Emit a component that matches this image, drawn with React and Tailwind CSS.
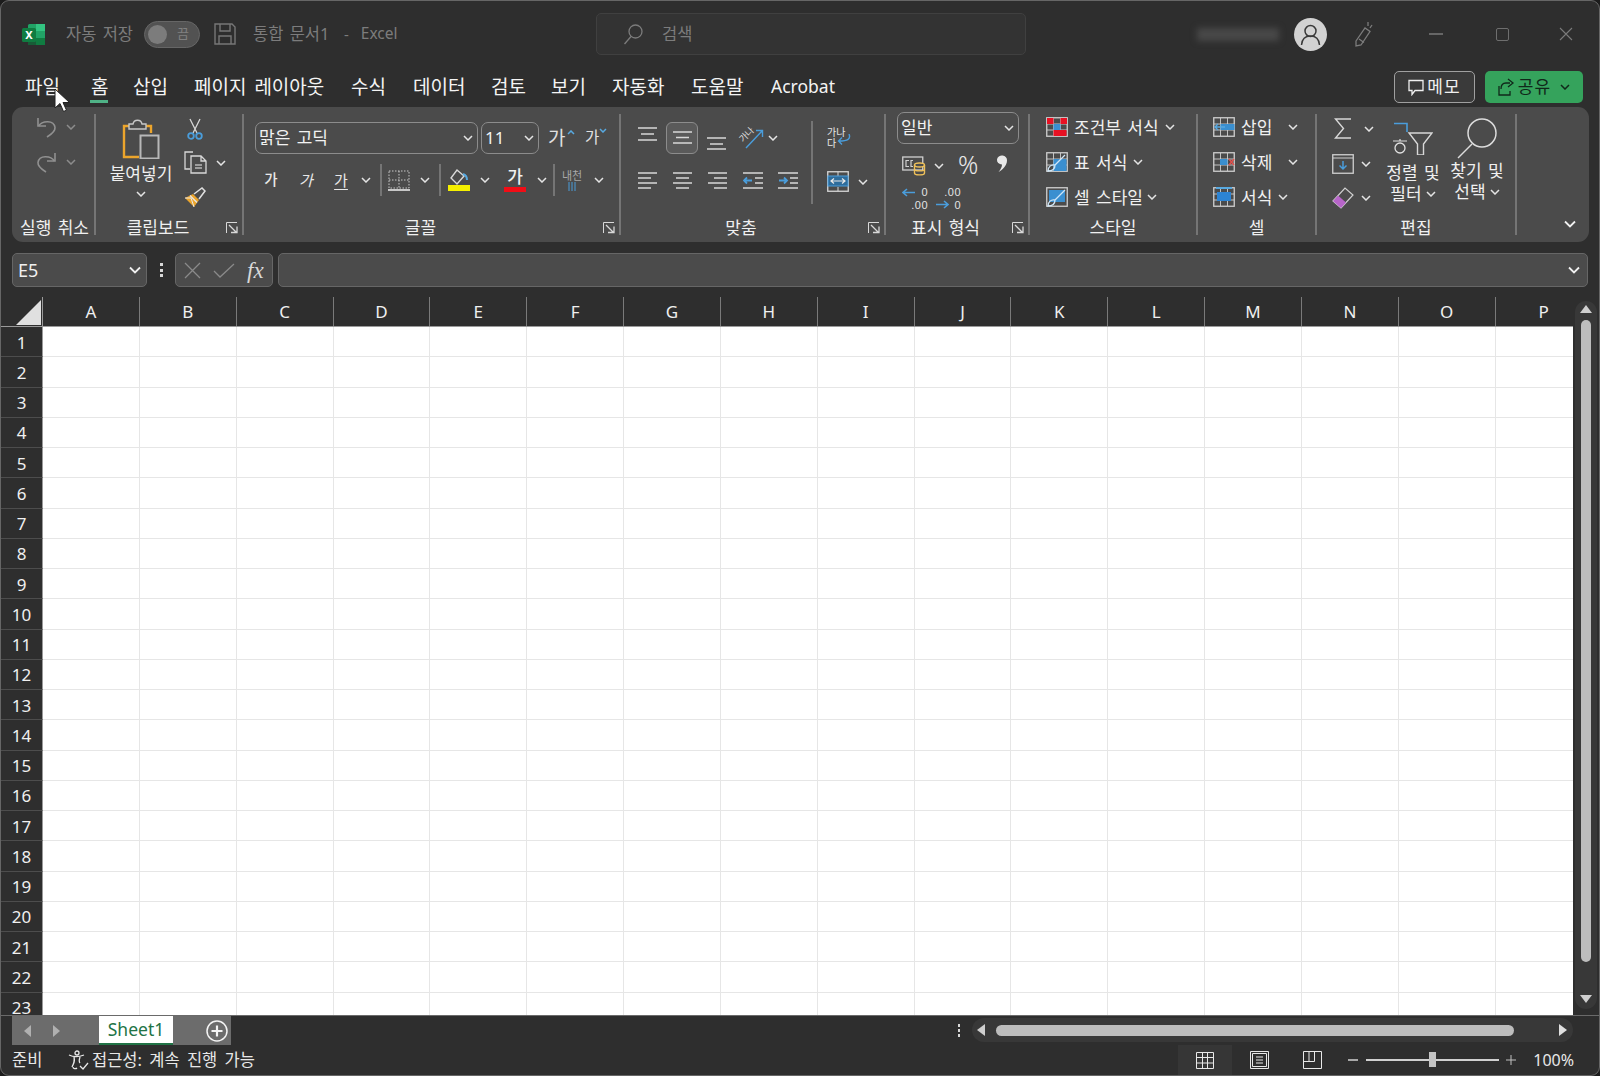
import React from 'react';

const COLUMNS = ['A', 'B', 'C', 'D', 'E', 'F', 'G', 'H', 'I', 'J', 'K', 'L', 'M', 'N', 'O', 'P'];
const ROWS = Array.from({ length: 23 }, (_, i) => i + 1);
const GRID_CELLS = Array.from({ length: 23 * 16 }, (_, i) => i);

const Chev = ({ className = '', color = '#e4e4e4' }) => (
  <svg width="10" height="6" viewBox="0 0 10 6" fill="none" className={`shrink-0 ${className}`}>
    <path d="M1 1l4 4 4-4" stroke={color} strokeWidth="1.5" />
  </svg>
);

const Slot = ({ className = '', children }) => (
  <div className={`flex items-center justify-center shrink-0 ${className}`}>{children}</div>
);

const Sep = () => <div className="w-[2px] h-[121px] self-center shrink-0 bg-[#757575]" />;
const MiniSep = () => <div className="w-[2px] h-[32px] shrink-0 bg-[#757575]" />;

const Launcher = () => (
  <svg width="12" height="12" viewBox="0 0 12 12" fill="none" className="absolute right-[4px] bottom-[8px]">
    <path d="M.5 11V.5H11" stroke="#d8d8d8" />
    <path d="M3 3l7 7M5 10.500h6v-6" stroke="#d8d8d8" strokeWidth="1.300" />
  </svg>
);

const GroupLabel = ({ className = '', children }) => (
  <div className={`mt-auto mb-[4px] h-[22px] flex items-center justify-center text-[17px] leading-none text-[#f0f0f0] whitespace-nowrap [word-spacing:2px] ${className}`}>
    {children}
  </div>
);

const RibbonText = ({ className = '', children }) => (
  <span className={`text-[17px] leading-none text-[#f0f0f0] whitespace-nowrap [word-spacing:2px] ${className}`}>{children}</span>
);

const ExcelLogo = () => (
  <svg width="23" height="21" viewBox="0 0 23 21" className="shrink-0">
    <rect x="6" y="0" width="17" height="21" rx="1.500" fill="#21a366" />
    <rect x="14" y="0" width="9" height="7" fill="#33c481" />
    <rect x="14" y="14" width="9" height="7" fill="#107c41" />
    <rect x="6" y="14" width="8" height="7" fill="#185c37" />
    <rect x="0" y="4" width="14" height="14" rx="1.500" fill="#107c41" />
    <text x="7" y="15" textAnchor="middle" fontSize="11" fontWeight="700" fill="#fff" fontFamily="Noto Sans">X</text>
  </svg>
);

const SaveIcon = () => (
  <svg width="22" height="22" viewBox="0 0 22 22" fill="none" stroke="#777" strokeWidth="1.400" className="shrink-0">
    <path d="M1 1h17l3 3v17H1z" />
    <path d="M6 1v7h10V1M5 21v-8h12v8" />
  </svg>
);

const SearchIcon = () => (
  <svg width="20" height="21" viewBox="0 0 20 21" fill="none" stroke="#7c7c7c" strokeWidth="1.300" className="shrink-0">
    <circle cx="12.500" cy="7.500" r="6.500" />
    <path d="M8 12.500L1.500 20" />
  </svg>
);

const Avatar = () => (
  <svg width="33" height="33" viewBox="0 0 33 33" fill="none" className="shrink-0">
    <circle cx="16.500" cy="16.500" r="16.500" fill="#d2d2d2" />
    <circle cx="16.500" cy="13" r="5.500" stroke="#3a3a3a" strokeWidth="1.500" />
    <path d="M7.500 27c.5-6 4-9 9-9s8.500 3 9 9" stroke="#3a3a3a" strokeWidth="1.500" />
  </svg>
);

const PenIcon = () => (
  <svg width="20" height="28" viewBox="0 0 20 28" fill="none" stroke="#7c7c7c" strokeWidth="1.300" className="shrink-0">
    <path d="M2 21L11 8l5 3.500L7 25l-5 1z" />
    <path d="M14 2v4M18 5l-2 3M5 19l5 3.500" />
  </svg>
);

const UndoIcon = ({ flip = false }) => (
  <svg width="21" height="22" viewBox="0 0 21 22" fill="none" stroke="#909090" strokeWidth="1.600" className={`shrink-0 ${flip ? '-scale-x-100' : ''}`}>
    <path d="M2 2v8h8" />
    <path d="M2.500 10C6 4.500 18 3.500 19 11.500c.4 3.500-4 7-8 9.500" />
  </svg>
);

const PasteIcon = () => (
  <svg width="38" height="41" viewBox="0 0 38 41" fill="none" className="shrink-0">
    <path d="M7 8H2v31h15M24 8h5v7" stroke="#eca52c" strokeWidth="2.400" />
    <path d="M7 11V6h4c1-5 8-5 9 0h4v5z" stroke="#c8c8c8" strokeWidth="1.400" fill="#4b4b4b" />
    <rect x="18.500" y="17.500" width="18" height="23" stroke="#b8b8b8" strokeWidth="2" fill="#4b4b4b" />
  </svg>
);

const ScissorsIcon = () => (
  <svg width="16" height="22" viewBox="0 0 16 22" fill="none" className="shrink-0">
    <path d="M3 1l7 14M13 1L6 15" stroke="#d8d8d8" strokeWidth="1.300" />
    <circle cx="4" cy="18" r="2.800" stroke="#4a9ddb" strokeWidth="1.800" />
    <circle cx="12" cy="18" r="2.800" stroke="#4a9ddb" strokeWidth="1.800" />
  </svg>
);

const CopyIcon = () => (
  <svg width="23" height="23" viewBox="0 0 23 23" fill="none" stroke="#d8d8d8" strokeWidth="1.300" className="shrink-0">
    <path d="M9 1H1v17h5" />
    <path d="M7 5h10l5 5v12H7zM17 5v5h5" />
    <path d="M11 14h7M11 17h7" stroke="#b8b8b8" />
  </svg>
);

const BrushIcon = () => (
  <svg width="22" height="21" viewBox="0 0 22 21" fill="none" className="shrink-0">
    <path d="M1 11l8-4 6 6-5 7z" fill="#eca52c" />
    <path d="M6 8.500l7 7" stroke="#e8e8e8" strokeWidth="1.300" />
    <path d="M10 7l8-6 3 3-6 8" stroke="#e0e0e0" strokeWidth="1.500" />
    <path d="M1 11h6l3 9" stroke="#e8e8e8" strokeWidth="1" />
  </svg>
);

const BordersIcon = () => (
  <svg width="22" height="21" viewBox="0 0 22 21" fill="none" className="shrink-0">
    <rect x="1" y="1" width="20" height="17" stroke="#c8c8c8" strokeDasharray="1.500 1.500" />
    <path d="M11 1v17M1 10h20" stroke="#c8c8c8" strokeDasharray="1.500 1.500" />
    <path d="M0 20h22" stroke="#f0f0f0" strokeWidth="1.500" />
  </svg>
);

const FillIcon = () => (
  <svg width="22" height="22" viewBox="0 0 22 22" fill="none" className="shrink-0">
    <path d="M9 1l7 6-7 8-6-6z" stroke="#d8d8d8" strokeWidth="1.400" />
    <path d="M15 5c3 1 4 3 4 6" stroke="#58a9e0" strokeWidth="2" />
    <rect x="0" y="16" width="22" height="6" fill="#f5ef00" />
  </svg>
);

const AlignV = ({ ys }) => (
  <svg width="19" height="32" viewBox="0 0 19 32" fill="none" stroke="#d8d8d8" strokeWidth="1.500" className="shrink-0">
    <path d={`M0 ${ys[0]}h19M3 ${ys[1]}h13M0 ${ys[2]}h19`} />
  </svg>
);

const AlignH = ({ kind }) => {
  const d = {
    left: 'M0 1h19M0 6h13M0 11h19M0 16h13',
    center: 'M0 1h19M3 6h13M0 11h19M3 16h13',
    right: 'M0 1h19M6 6h13M0 11h19M6 16h13',
  }[kind];
  return (
    <svg width="19" height="17" viewBox="0 0 19 17" fill="none" stroke="#d8d8d8" strokeWidth="1.500" className="shrink-0">
      <path d={d} />
    </svg>
  );
};

const IndentIcon = ({ inc = false }) => (
  <svg width="20" height="17" viewBox="0 0 20 17" fill="none" className="shrink-0">
    <path d="M0 1h20M0 16h20M12 6h8M12 11h8" stroke="#d8d8d8" strokeWidth="1.500" />
    <path d={inc ? 'M1 8.500h8M6 5.500l3 3-3 3' : 'M9 8.500H1M4 5.500l-3 3 3 3'} stroke="#4a9ddb" strokeWidth="1.800" />
  </svg>
);

const MergeIcon = () => (
  <svg width="22" height="21" viewBox="0 0 22 21" fill="none" className="shrink-0">
    <rect x=".75" y=".75" width="20.500" height="19.500" stroke="#d8d8d8" strokeWidth="1.300" />
    <path d="M11 1v4M11 16v4" stroke="#d8d8d8" />
    <rect x="1" y="5" width="20" height="10" fill="#2f6d9c" stroke="#4a9ddb" />
    <path d="M4 10h14M7 7.500L4 10l3 2.500M15 7.500l3 2.500-3 2.500" stroke="#e8e8e8" strokeWidth="1.200" />
  </svg>
);

const AccountingIcon = () => (
  <svg width="24" height="20" viewBox="0 0 24 20" fill="none" className="shrink-0">
    <rect x=".75" y="1" width="20" height="13" stroke="#d0d0d0" strokeWidth="1.300" />
    <path d="M7 4.500H4v6h3M11 4.500H9v6h2" stroke="#d0d0d0" strokeWidth="1.200" />
    <ellipse cx="17.500" cy="9" rx="5" ry="2" fill="#4c4c4c" stroke="#eec05a" strokeWidth="1.400" />
    <path d="M12.500 9v8c0 2.500 10 2.500 10 0V9M12.500 13c0 2.500 10 2.500 10 0" stroke="#eec05a" strokeWidth="1.400" />
  </svg>
);

const CommaIcon = () => (
  <svg width="12" height="17" viewBox="0 0 12 17" className="shrink-0">
    <path d="M1 4.500a5 4.500 0 1 1 10 1C11 11 6 15 2.500 17c2-2.500 3.500-5 3.500-7.500a5 4.500 0 0 1-5-5z" fill="#e8e8e8" />
  </svg>
);

const GridBase = ({ children, stroke = '#cfcfcf' }) => (
  <svg width="22" height="20" viewBox="0 0 22 20" fill="none" className="shrink-0">
    <rect x=".75" y=".75" width="20.500" height="18.500" stroke={stroke} strokeWidth="1.300" />
    <path d="M7.500 1v18M14.500 1v18M1 7h20M1 13h20" stroke={stroke} strokeWidth=".9" />
    {children}
  </svg>
);

const SigmaIcon = () => (
  <svg width="18" height="21" viewBox="0 0 18 21" fill="none" stroke="#d8d8d8" strokeWidth="1.400" className="shrink-0">
    <path d="M17 1H1.500l8 9.500-8 9.500H17" />
  </svg>
);

const FillDownIcon = () => (
  <svg width="22" height="20" viewBox="0 0 22 20" fill="none" className="shrink-0">
    <rect x=".75" y=".75" width="20.500" height="18.500" stroke="#d0d0d0" strokeWidth="1.300" />
    <path d="M1 4h20" stroke="#d0d0d0" />
    <path d="M11 7v8M7.500 11.500L11 15l3.500-3.500" stroke="#4a9ddb" strokeWidth="1.500" />
  </svg>
);

const EraserIcon = () => (
  <svg width="22" height="22" viewBox="0 0 22 22" fill="none" className="shrink-0">
    <path d="M1 14L13 1l8 7L9 21z" stroke="#d0d0d0" strokeWidth="1.200" />
    <path d="M1 14l5-5.500 8 7L9 21z" fill="#b765c9" />
  </svg>
);

const SortIcon = () => (
  <svg width="40" height="33" viewBox="0 0 40 33" fill="none" className="shrink-0">
    <path d="M1 1.500h13V10" stroke="#4a9ddb" strokeWidth="1.600" />
    <path d="M0 19h14M7 17v2" stroke="#e0e0e0" strokeWidth="1.200" />
    <circle cx="7" cy="26" r="5" stroke="#e0e0e0" strokeWidth="1.300" />
    <path d="M16 11h23l-8.500 11v11h-6V22z" stroke="#d8d8d8" strokeWidth="1.400" />
  </svg>
);

const FindIcon = () => (
  <svg width="40" height="41" viewBox="0 0 40 41" fill="none" stroke="#dcdcdc" strokeWidth="1.500" className="shrink-0">
    <circle cx="25" cy="15" r="14" />
    <path d="M15 26L1 40" />
  </svg>
);

const AccessIcon = () => (
  <svg width="21" height="20" viewBox="0 0 21 20" fill="none" stroke="#e8e8e8" strokeWidth="1.300" className="shrink-0">
    <circle cx="9" cy="3" r="2" />
    <path d="M1 5c4 2 10 2 15 0M6 7c1 4 0 6-2 10M12 7c-1 3-1 5 0 6M5 17c0 2 3 2 4 1" />
    <path d="M12 16l3 3 5-6" />
  </svg>
);

const MenuTab = ({ className, active, children }) => (
  <div className={`relative shrink-0 text-[19px] leading-none text-[#f4f4f4] whitespace-nowrap ${className}`}>
    {children}
    {active && <div className="absolute left-[-1px] top-[22px] w-[18px] h-[3px] bg-[#4fb286]" />}
  </div>
);

const SelectBox = ({ className = '', text }) => (
  <div className={`flex items-center justify-between shrink-0 h-[32px] rounded-[7px] border border-[#8c8c8c] pl-[3px] pr-[4px] text-[17px] text-[#f2f2f2] whitespace-nowrap [word-spacing:2px] ${className}`}>
    <span>{text}</span>
    <Chev />
  </div>
);

const Ribbon = () => (
  <div className="ml-[11px] w-[1577px] h-[135px] shrink-0 flex rounded-[11px] bg-[#4b4b4b] overflow-hidden">
    {/* Undo */}
    <div className="w-[82px] shrink-0 flex flex-col pt-[9px]">
      <div className="flex items-center ml-[24px]">
        <UndoIcon />
        <Chev className="ml-[9px]" color="#8c8c8c" />
      </div>
      <div className="flex items-center ml-[24px] mt-[13px]">
        <UndoIcon flip />
        <Chev className="ml-[9px]" color="#8c8c8c" />
      </div>
      <GroupLabel className="pl-[3px]">실행 취소</GroupLabel>
    </div>
    <Sep />

    {/* Clipboard */}
    <div className="relative w-[146px] shrink-0 flex flex-col">
      <div className="flex">
        <div className="w-[91px] shrink-0 flex flex-col items-center pt-[11px] pl-[6px] pr-[7px]">
          <PasteIcon />
          <RibbonText className="mt-[6px]">붙여넣기</RibbonText>
          <Chev className="mt-[9px]" />
        </div>
        <div className="flex flex-col pt-[11px]">
          <ScissorsIcon />
          <div className="flex items-center mt-[11px] ml-[-3px]">
            <CopyIcon />
            <Chev className="ml-[9px]" />
          </div>
          <div className="mt-[13px] ml-[-3px]">
            <BrushIcon />
          </div>
        </div>
      </div>
      <GroupLabel className="pr-[22px]">클립보드</GroupLabel>
      <Launcher />
    </div>
    <Sep />

    {/* Font */}
    <div className="relative w-[375px] shrink-0 flex flex-col pt-[15px]">
      <div className="flex items-center ml-[11px]">
        <SelectBox className="w-[223px]" text="맑은 고딕" />
        <SelectBox className="w-[58px] ml-[3px]" text="11" />
        <div className="relative ml-[9px] w-[37px] text-[19px] leading-none text-[#e0e0e0]">
          가
          <svg width="8" height="5" viewBox="0 0 8 5" fill="none" className="absolute left-[19px] top-[1px]"><path d="M1 4l3-3 3 3" stroke="#58a9e0" strokeWidth="1.500" /></svg>
        </div>
        <div className="relative w-[24px] text-[15.500px] leading-none text-[#e0e0e0]">
          가
          <svg width="8" height="5" viewBox="0 0 8 5" fill="none" className="absolute left-[14px] top-[-2px]"><path d="M1 1l3 3 3-3" stroke="#58a9e0" strokeWidth="1.500" /></svg>
        </div>
      </div>
      <div className="flex items-center h-[28px] mt-[12px] text-[#e8e8e8]">
        <Slot className="w-[36px] ml-[9px] text-[14.500px] font-medium">가</Slot>
        <Slot className="w-[34px] text-[15px] italic">가</Slot>
        <Slot className="w-[36px] text-[15px] underline underline-offset-[3px]">가</Slot>
        <Slot className="w-[14px]"><Chev /></Slot>
        <Slot className="w-[7px]" />
        <MiniSep />
        <Slot className="w-[33px]"><BordersIcon /></Slot>
        <Slot className="w-[20px]"><Chev /></Slot>
        <Slot className="w-[4px]" />
        <MiniSep />
        <Slot className="w-[36px]"><FillIcon /></Slot>
        <Slot className="w-[16px]"><Chev /></Slot>
        <Slot className="w-[44px]">
          <div className="flex flex-col items-center">
            <span className="text-[17px] leading-[17px] font-medium text-[#f0f0f0]">가</span>
            <span className="w-[22px] h-[5px] mt-[2px] bg-[#f20d16]" />
          </div>
        </Slot>
        <Slot className="w-[10px]"><Chev /></Slot>
        <Slot className="w-[6px]" />
        <MiniSep />
        <Slot className="w-[34px]">
          <div className="flex flex-col items-center">
            <span className="text-[11px] leading-[12px] text-[#a8a8a8]">내천</span>
            <svg width="10" height="9" viewBox="0 0 10 9" fill="none" stroke="#4a9ddb"><path d="M2 0v9M5 0v9M8 0v9" /></svg>
          </div>
        </Slot>
        <Slot className="w-[20px]"><Chev /></Slot>
      </div>
      <GroupLabel className="pr-[22px]">글꼴</GroupLabel>
      <Launcher />
    </div>
    <Sep />

    {/* Alignment */}
    <div className="relative w-[263px] shrink-0 flex flex-col">
      <div className="flex">
        <div className="w-[190px] shrink-0 pt-[15px] pl-[9px]">
          <div className="flex items-center">
            <Slot className="w-[35px]"><AlignV ys={[6, 12, 18]} /></Slot>
            <Slot className="w-[32px] h-[32px] ml-[1px] rounded-[6px] border border-[#8c8c8c] bg-[#5a5a5a]"><AlignV ys={[10, 15.5, 21]} /></Slot>
            <Slot className="w-[35px] ml-[1px]"><AlignV ys={[16, 22, 27]} /></Slot>
            <Slot className="w-[34px]">
              <div className="relative w-[26px] h-[22px]">
                <span className="absolute left-0 top-[3px] text-[9px] leading-none text-[#e0e0e0] -rotate-45">가나</span>
                <svg width="26" height="22" viewBox="0 0 26 22" fill="none" stroke="#4a9ddb" strokeWidth="1.400" className="absolute inset-0"><path d="M8 21L24 4M18 3.500h6.500V10" /></svg>
              </div>
            </Slot>
            <Slot className="w-[10px]"><Chev /></Slot>
          </div>
          <div className="flex items-center mt-[16px] h-[20px]">
            <Slot className="w-[35px]"><AlignH kind="left" /></Slot>
            <Slot className="w-[35px]"><AlignH kind="center" /></Slot>
            <Slot className="w-[35px]"><AlignH kind="right" /></Slot>
            <Slot className="w-[35px]"><IndentIcon /></Slot>
            <Slot className="w-[35px]"><IndentIcon inc /></Slot>
          </div>
        </div>
        <div className="w-[2px] h-[83px] mt-[14px] shrink-0 bg-[#757575]" />
        <div className="flex flex-col pt-[20px] pl-[14px]">
          <div className="relative w-[24px] h-[24px] text-[10px] leading-[11px] text-[#e8e8e8]">
            가나<br />다
            <svg width="14" height="12" viewBox="0 0 14 12" fill="none" stroke="#4a9ddb" strokeWidth="1.400" className="absolute left-[10px] top-[7px]"><path d="M12 0c2 5-1 7-10 7M5 3.500L1.500 7 5 10.500" /></svg>
          </div>
          <div className="flex items-center mt-[20px]">
            <MergeIcon />
            <Chev className="ml-[9px]" />
          </div>
        </div>
      </div>
      <GroupLabel className="pr-[23px]">맞춤</GroupLabel>
      <Launcher />
    </div>
    <Sep />

    {/* Number */}
    <div className="relative w-[142px] shrink-0 flex flex-col pt-[5px]">
      <SelectBox className="w-[122px] ml-[11px]" text="일반" />
      <div className="flex items-center ml-[16px] mt-[12px] h-[20px]">
        <AccountingIcon />
        <Chev className="ml-[8px]" />
        <span className="ml-[14px] text-[25px] leading-none mt-[-4px] font-light text-[#e8e8e8]">%</span>
        <span className="ml-[18px] mt-[-5px]"><CommaIcon /></span>
      </div>
      <div className="flex items-center ml-[16px] mt-[10px]">
        <div className="relative w-[26px] h-[25px] font-['Liberation_Sans',sans-serif] text-[11px] tracking-[.5px] text-[#e4e4e4] text-right">
          <span className="block h-[12.700px] leading-[12.700px]">0</span>
          <span className="block h-[12.700px] leading-[12.700px]">.00</span>
          <svg width="13" height="9" viewBox="0 0 13 9" fill="none" stroke="#4a9ddb" strokeWidth="1.600" className="absolute left-0 top-[2px]"><path d="M13 4.500H1M5 1L1 4.500 5 8" /></svg>
        </div>
        <div className="relative w-[26px] h-[25px] ml-[7px] font-['Liberation_Sans',sans-serif] text-[11px] tracking-[.5px] text-[#e4e4e4] text-right">
          <span className="block h-[12.700px] leading-[12.700px]">.00</span>
          <span className="block h-[12.700px] leading-[12.700px]">0</span>
          <svg width="13" height="9" viewBox="0 0 13 9" fill="none" stroke="#4a9ddb" strokeWidth="1.600" className="absolute left-[1px] top-[14px]"><path d="M0 4.500h12M8 1l4 3.500L8 8" /></svg>
        </div>
      </div>
      <GroupLabel className="pr-[23px]">표시 형식</GroupLabel>
      <Launcher />
    </div>
    <Sep />

    {/* Styles */}
    <div className="w-[166px] shrink-0 flex flex-col pt-[9px]">
      <div className="flex items-center ml-[16px] h-[22px]">
        <GridBase>
          <rect x="1" y="1" width="6.500" height="6" fill="#e81123" />
          <rect x="14.500" y="1" width="6.500" height="6" fill="#e81123" />
          <rect x="7.500" y="7" width="7" height="6" fill="#3a8fd0" />
          <rect x="7.500" y="13" width="13" height="6" fill="#e81123" />
        </GridBase>
        <RibbonText className="ml-[6px]">조건부 서식</RibbonText>
        <Chev className="ml-[6px]" />
      </div>
      <div className="flex items-center ml-[16px] h-[22px] mt-[13px]">
        <GridBase>
          <rect x="7.500" y="7" width="13" height="12" fill="#3a8fd0" />
          <path d="M19 3L9 13M2 19c0-4 3-7 7-6 0 4-3 6-7 6z" stroke="#cfe6f7" strokeWidth="1.300" />
        </GridBase>
        <RibbonText className="ml-[6px]">표 서식</RibbonText>
        <Chev className="ml-[6px]" />
      </div>
      <div className="flex items-center ml-[16px] h-[22px] mt-[13px]">
        <svg width="22" height="20" viewBox="0 0 22 20" fill="none" className="shrink-0">
          <rect x=".75" y=".75" width="20.500" height="18.500" stroke="#cfcfcf" strokeWidth="1.300" />
          <rect x="3" y="3" width="16" height="12" fill="#3a8fd0" />
          <path d="M19 3L9 13M2 19c0-4 3-7 7-6 0 4-3 6-7 6z" stroke="#cfe6f7" strokeWidth="1.300" />
        </svg>
        <RibbonText className="ml-[6px]">셀 스타일</RibbonText>
        <Chev className="ml-[4px]" />
      </div>
      <GroupLabel>스타일</GroupLabel>
    </div>
    <Sep />

    {/* Cells */}
    <div className="w-[117px] shrink-0 flex flex-col pt-[9px]">
      <div className="flex items-center ml-[15px] h-[22px]">
        <GridBase>
          <rect x="7.500" y="7" width="14" height="6" fill="#3a8fd0" />
          <path d="M12 10H2M5 7l-3 3 3 3" stroke="#58a9e0" strokeWidth="1.400" />
        </GridBase>
        <RibbonText className="ml-[6px] w-[31px]">삽입</RibbonText>
        <Chev className="ml-[16px]" />
      </div>
      <div className="flex items-center ml-[15px] h-[22px] mt-[13px]">
        <GridBase>
          <rect x="7" y="7" width="7.500" height="6" fill="#3a8fd0" />
          <path d="M16 7l5 6M21 7l-5 6" stroke="#e0524e" strokeWidth="1.500" />
        </GridBase>
        <RibbonText className="ml-[6px] w-[31px]">삭제</RibbonText>
        <Chev className="ml-[16px]" />
      </div>
      <div className="flex items-center ml-[15px] h-[22px] mt-[13px]">
        <GridBase>
          <rect x="4" y="5" width="14" height="9" fill="#2c84d4" />
          <path d="M3 1h16" stroke="#58a9e0" strokeWidth="2" />
        </GridBase>
        <RibbonText className="ml-[6px] w-[31px]">서식</RibbonText>
        <Chev className="ml-[6px]" />
      </div>
      <GroupLabel>셀</GroupLabel>
    </div>
    <Sep />

    {/* Editing */}
    <div className="w-[198px] shrink-0 flex flex-col">
      <div className="flex">
        <div className="w-[67px] shrink-0 flex flex-col pt-[11px] pl-[15px]">
          <div className="flex items-center h-[21px]">
            <span className="ml-[2px]"><SigmaIcon /></span>
            <Chev className="ml-[12px]" />
          </div>
          <div className="flex items-center h-[21px] mt-[14px]">
            <FillDownIcon />
            <Chev className="ml-[7px]" />
          </div>
          <div className="flex items-center h-[22px] mt-[13px]">
            <EraserIcon />
            <Chev className="ml-[7px]" />
          </div>
        </div>
        <div className="w-[58px] shrink-0 flex flex-col items-center pt-[15px]">
          <SortIcon />
          <RibbonText className="mt-[9px]">정렬 및</RibbonText>
          <div className="flex items-center mt-[4px]">
            <RibbonText>필터</RibbonText>
            <Chev className="ml-[4px]" />
          </div>
        </div>
        <div className="w-[62px] ml-[4px] shrink-0 flex flex-col items-center pt-[11px]">
          <FindIcon />
          <RibbonText className="mt-[3px]">찾기 및</RibbonText>
          <div className="flex items-center mt-[4px]">
            <RibbonText>선택</RibbonText>
            <Chev className="ml-[4px]" />
          </div>
        </div>
      </div>
      <GroupLabel>편집</GroupLabel>
    </div>
    <Sep />

    <div className="flex-1 flex items-end justify-end pb-[14px] pr-[13px]">
      <svg width="12" height="8" viewBox="0 0 12 8" fill="none"><path d="M1 1.500l5 5 5-5" stroke="#f0f0f0" strokeWidth="1.800" /></svg>
    </div>
  </div>
);

export default function App() {
  return (
    <div className="relative w-[1600px] h-[1076px] bg-[#1c1c1c] overflow-hidden font-['Noto_Sans','Noto_Sans_CJK_KR',sans-serif]">
      <div className="w-full h-full flex flex-col rounded-[9px] border border-[#666666] bg-[#2e2e2e] overflow-hidden">
        {/* Title bar */}
        <div className="h-[66px] shrink-0 flex items-center text-[#7c7c7c]">
          <div className="w-[595px] shrink-0 flex items-center pl-[21px]">
            <ExcelLogo />
            <span className="w-[78px] ml-[21px] text-[16.500px] whitespace-nowrap [word-spacing:2px]">자동 저장</span>
            <div className="w-[56px] h-[27px] shrink-0 flex items-center justify-between rounded-full bg-[#525252] border border-[#666666] pl-[3px] pr-[10px]">
              <span className="w-[19px] h-[19px] rounded-full bg-[#7c7c7c]" />
              <span className="text-[13px] text-[#808080]">끔</span>
            </div>
            <span className="ml-[14px]"><SaveIcon /></span>
            <span className="w-[77px] ml-[17px] text-[16.500px] whitespace-nowrap [word-spacing:2px]">통합 문서1</span>
            <span className="ml-[14px] text-[15px]">-</span>
            <span className="ml-[12px] text-[15.500px]">Excel</span>
          </div>
          <div className="w-[430px] h-[42px] shrink-0 flex items-center rounded-[5px] bg-[#333333] border border-[#404040] pl-[26px]">
            <SearchIcon />
            <span className="ml-[19px] text-[16.500px]">검색</span>
          </div>
          <div className="w-[82px] h-[13px] ml-[171px] shrink-0 bg-[#484848] blur-[3px]" />
          <span className="ml-[15px]"><Avatar /></span>
          <span className="ml-[27px]"><PenIcon /></span>
          <div className="w-[14px] h-[1.500px] ml-[55px] shrink-0 bg-[#666666]" />
          <div className="w-[13px] h-[13px] ml-[53px] shrink-0 rounded-[2px] border border-[#6e6e6e]" />
          <svg width="14" height="14" viewBox="0 0 14 14" fill="none" stroke="#7a7a7a" strokeWidth="1.100" className="ml-[50px] shrink-0"><path d="M1 1l12 12M13 1L1 13" /></svg>
        </div>

        {/* Menu tabs */}
        <div className="h-[40px] shrink-0 flex items-center pl-[24px] pr-[16px]">
          <MenuTab className="w-[66px]">파일</MenuTab>
          <MenuTab className="w-[42px]" active>홈</MenuTab>
          <MenuTab className="w-[61px]">삽입</MenuTab>
          <MenuTab className="w-[157px] [word-spacing:3px]">페이지 레이아웃</MenuTab>
          <MenuTab className="w-[62px]">수식</MenuTab>
          <MenuTab className="w-[78px]">데이터</MenuTab>
          <MenuTab className="w-[60px]">검토</MenuTab>
          <MenuTab className="w-[61px]">보기</MenuTab>
          <MenuTab className="w-[79px]">자동화</MenuTab>
          <MenuTab className="w-[80px]">도움말</MenuTab>
          <MenuTab className="w-[70px] !text-[17.500px]">Acrobat</MenuTab>
          <div className="ml-auto w-[81px] h-[32px] flex items-center justify-center rounded-[5px] border border-[#a0a0a0] bg-[#3a3a3a] text-[17px] tracking-[1px] text-[#f0f0f0]">
            <svg width="16" height="17" viewBox="0 0 16 17" fill="none" stroke="#f0f0f0" strokeWidth="1.300" className="mr-[3px]"><path d="M1 1.500h14v10H7l-3 4v-4H1z" /></svg>
            메모
          </div>
          <div className="ml-[10px] w-[98px] h-[32px] flex items-center justify-center rounded-[5px] bg-[#35a35c] text-[17px] tracking-[1px] text-[#10281a]">
            <svg width="17" height="18" viewBox="0 0 17 18" fill="none" stroke="#10281a" strokeWidth="1.300" className="mr-[3px]"><path d="M12 5H8c-3 0-5 2-5 6M10 1l5 4-5 4M1 8v9h11v-4" /></svg>
            공유
            <Chev className="ml-[9px]" color="#10281a" />
          </div>
        </div>

        <Ribbon />

        {/* Formula bar */}
        <div className="h-[55px] shrink-0 flex items-start pt-[11px] pl-[11px]">
          <div className="w-[135px] h-[34px] shrink-0 flex items-center justify-between rounded-[5px] border border-[#666666] bg-[#4b4b4b] pl-[5px] pr-[5px] text-[18px] text-[#f0f0f0]">
            E5
            <svg width="12" height="8" viewBox="0 0 12 8" fill="none"><path d="M1 1.500l5 5 5-5" stroke="#f0f0f0" strokeWidth="1.800" /></svg>
          </div>
          <div className="w-[28px] h-[34px] shrink-0 flex flex-col items-center justify-center gap-[2.500px]">
            <span className="w-[3px] h-[3px] bg-[#d8d8d8]" />
            <span className="w-[3px] h-[3px] bg-[#d8d8d8]" />
            <span className="w-[3px] h-[3px] bg-[#d8d8d8]" />
          </div>
          <div className="w-[98px] h-[34px] shrink-0 flex items-center rounded-[5px] border border-[#666666] bg-[#4b4b4b] pl-[8px]">
            <svg width="17" height="17" viewBox="0 0 17 17" fill="none" stroke="#8a8a8a" strokeWidth="1.300"><path d="M1 1l15 15M16 1L1 16" /></svg>
            <svg width="22" height="15" viewBox="0 0 22 15" fill="none" stroke="#8a8a8a" strokeWidth="1.300" className="ml-[12px]"><path d="M1 8l6 6L21 1" /></svg>
            <span className="ml-[12px] text-[23px] leading-none font-['Liberation_Serif',serif] italic text-[#d8d8d8]">fx</span>
          </div>
          <div className="w-[1310px] h-[34px] ml-[5px] shrink-0 flex items-center justify-end rounded-[5px] border border-[#666666] bg-[#4b4b4b] pr-[7px]">
            <svg width="12" height="8" viewBox="0 0 12 8" fill="none"><path d="M1 1.500l5 5 5-5" stroke="#f0f0f0" strokeWidth="1.800" /></svg>
          </div>
        </div>

        {/* Sheet */}
        <div className="h-[719px] shrink-0 flex border-b border-[#6a6a6a]">
          <div className="w-[1572px] shrink-0 flex flex-col overflow-hidden">
            <div className="h-[30px] shrink-0 flex border-b border-[#9a9a9a]">
              <div className="w-[42px] shrink-0 flex items-end justify-end pr-[1px] pb-[1px] border-r border-[#9a9a9a]">
                <div className="w-[25px] h-[25px] bg-[#e0e0e0] [clip-path:polygon(100%_0,100%_100%,0_100%)]" />
              </div>
              {COLUMNS.map((c) => (
                <div key={c} className="w-[96.850px] shrink-0 flex items-center justify-center border-r border-[#7a7a7a] text-[17px] text-[#f0f0f0]">
                  {c}
                </div>
              ))}
            </div>
            <div className="flex-1 flex min-h-0">
              <div className="w-[42px] shrink-0 flex flex-col">
                {ROWS.map((r) => (
                  <div key={r} className="h-[30.250px] shrink-0 flex items-center justify-center pt-[1px] border-b border-[#4d4d4d] border-r-[#9a9a9a] border-r text-[17px] leading-none text-[#f0f0f0]">
                    {r}
                  </div>
                ))}
              </div>
              <div className="flex-1 min-w-0 grid grid-cols-[repeat(16,96.850px)] auto-rows-[30.250px] bg-white">
                {GRID_CELLS.map((i) => (
                  <div key={i} className="border-r border-b border-[#e6e6e6]" />
                ))}
              </div>
            </div>
          </div>
          <div className="flex-1 flex flex-col items-center pl-[1px] pr-[1px] pt-[4px]">
            <div className="w-[22px] h-[708px] flex flex-col items-center rounded-full bg-[#383838] pt-[4px] pb-[4px]">
              <svg width="12" height="8" viewBox="0 0 12 8" fill="#cfcfcf"><path d="M6 0l6 8H0z" /></svg>
              <div className="w-[10px] h-[642px] mt-[7px] rounded-full bg-[#bdbdbd]" />
              <svg width="12" height="8" viewBox="0 0 12 8" fill="#cfcfcf" className="mt-auto mb-[2px]"><path d="M6 8l6-8H0z" /></svg>
            </div>
          </div>
        </div>

        {/* Sheet tabs and horizontal scroll */}
        <div className="h-[29px] shrink-0 flex items-stretch pl-[11px]">
          <div className="w-[87px] shrink-0 flex items-center bg-[#6c6c6c] pl-[12px]">
            <svg width="7" height="12" viewBox="0 0 7 12" fill="#b0b0b0"><path d="M7 0v12L0 6z" /></svg>
            <svg width="7" height="12" viewBox="0 0 7 12" fill="#b0b0b0" className="ml-[22px]"><path d="M0 0v12l7-6z" /></svg>
          </div>
          <div className="w-[74px] shrink-0 flex items-center justify-center bg-white border-b-2 border-[#217346] text-[17.500px] text-[#217346]">Sheet1</div>
          <div className="w-[58px] shrink-0 flex items-center justify-end bg-[#6c6c6c] pr-[3px]">
            <svg width="22" height="22" viewBox="0 0 22 22" fill="none" stroke="#f4f4f4"><circle cx="11" cy="11" r="10" strokeWidth="1.500" /><path d="M11 5.500v11M5.500 11h11" strokeWidth="2.200" /></svg>
          </div>
          <div className="w-[741px] shrink-0 flex items-center justify-end pr-[12px]">
            <div className="flex flex-col gap-[2.500px]">
              <span className="w-[2.500px] h-[2.500px] bg-[#d8d8d8]" />
              <span className="w-[2.500px] h-[2.500px] bg-[#d8d8d8]" />
              <span className="w-[2.500px] h-[2.500px] bg-[#d8d8d8]" />
            </div>
          </div>
          <div className="w-[601px] h-[24px] mt-[2px] shrink-0 flex items-center rounded-full bg-[#383838] pl-[5px] pr-[6px]">
            <svg width="8" height="12" viewBox="0 0 8 12" fill="#cfcfcf"><path d="M8 0v12L0 6z" /></svg>
            <div className="w-[518px] h-[11px] ml-[11px] rounded-full bg-[#bdbdbd]" />
            <svg width="8" height="12" viewBox="0 0 8 12" fill="#e0e0e0" className="ml-auto"><path d="M0 0v12l8-6z" /></svg>
          </div>
        </div>

        {/* Status bar */}
        <div className="flex-1 flex items-center pl-[11px] text-[16.500px] text-[#e8e8e8]">
          <span className="w-[56px] shrink-0">준비</span>
          <AccessIcon />
          <span className="ml-[3px] whitespace-nowrap [word-spacing:3px]">접근성: 계속 진행 가능</span>
          <div className="ml-auto h-full w-[54px] shrink-0 flex items-center justify-center bg-[#363636]">
            <svg width="18" height="17" viewBox="0 0 18 17" fill="none" stroke="#e8e8e8"><path d="M.5.500h17v16H.5zM6.500.500v16M11.500.500v16M.5 5.500h17M.5 11h17" /></svg>
          </div>
          <svg width="19" height="18" viewBox="0 0 19 18" fill="none" stroke="#e8e8e8" className="ml-[18px] shrink-0"><path d="M.5.500h18v17H.5zM2.500 2.500h14v13h-14z" /><path d="M6 6h7M6 9h7M6 12h7" /></svg>
          <svg width="19" height="18" viewBox="0 0 19 18" fill="none" stroke="#e8e8e8" className="ml-[34px] shrink-0"><path d="M.5.500h18v17H.5zM.5 10.500h11V.5M6 .5v10" /></svg>
          <div className="w-[10px] h-[1.500px] ml-[26px] shrink-0 bg-[#a8a8a8]" />
          <div className="relative w-[133px] h-[1.500px] ml-[8px] shrink-0 bg-[#d0d0d0]">
            <div className="absolute left-[63px] top-[-7px] w-[7px] h-[15px] bg-[#c4c4c4]" />
          </div>
          <svg width="10" height="10" viewBox="0 0 10 10" fill="none" stroke="#c0c0c0" className="ml-[7px] shrink-0"><path d="M5 0v10M0 5h10" /></svg>
          <span className="ml-[17px] mr-[25px] text-[16px]">100%</span>
        </div>
      </div>

      {/* Mouse pointer */}
      <svg width="17" height="25" viewBox="0 0 17 25" className="absolute left-[54px] top-[88px]">
        <path d="M1 1v19l5-4.500 3.500 8 3-1.300-3.500-7.700h6.500z" fill="#fff" stroke="#222" strokeWidth="1" />
      </svg>
    </div>
  );
}
